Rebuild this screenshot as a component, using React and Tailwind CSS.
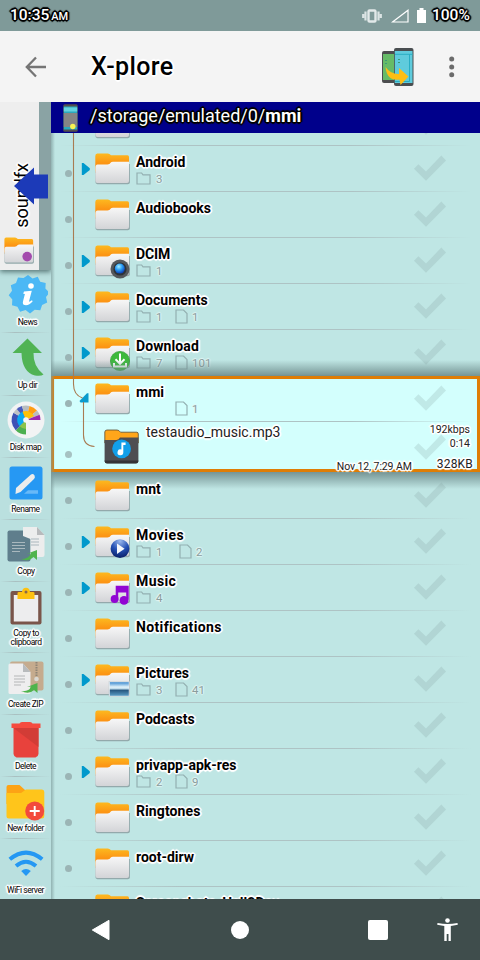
import React from 'react';

const HALO =
  '[text-shadow:1px_0_0_#fff,-1px_0_0_#fff,0_1px_0_#fff,0_-1px_0_#fff,1px_1px_0_#fff,-1px_-1px_0_#fff,1px_-1px_0_#fff,-1px_1px_0_#fff,2px_0_1px_#fff,-2px_0_1px_#fff,0_2px_1px_#fff,0_-2px_1px_#fff]';
const DARK_HALO =
  '[text-shadow:1px_0_0_#000,-1px_0_0_#000,0_1px_0_#000,0_-1px_0_#000,1px_1px_0_#000,-1px_-1px_0_#000,1px_-1px_0_#000,-1px_1px_0_#000,2px_0_1px_#000,-2px_0_1px_#000,0_2px_1px_#000,0_-2px_1px_#000]';
const SOFT_HALO =
  '[text-shadow:1px_0_1px_#e4f6f5,-1px_0_1px_#e4f6f5,0_1px_1px_#e4f6f5,0_-1px_1px_#e4f6f5]';

function Defs() {
  return (
    <svg width="0" height="0" className="absolute">
      <defs>
        <linearGradient id="tab" x1="0" y1="0" x2="0" y2="1">
          <stop offset="0" stopColor="#fdb91f" />
          <stop offset="0.5" stopColor="#fc9414" />
        </linearGradient>
        <linearGradient id="front" x1="0" y1="0" x2="0" y2="1">
          <stop offset="0" stopColor="#f7f7f7" />
          <stop offset="1" stopColor="#d3d4d7" />
        </linearGradient>
        <radialGradient id="lens" cx="0.4" cy="0.3" r="0.7">
          <stop offset="0" stopColor="#a4efff" />
          <stop offset="0.5" stopColor="#2a9cf4" />
          <stop offset="1" stopColor="#0c3fb4" />
        </radialGradient>
        <radialGradient id="play" cx="0.5" cy="0.1" r="0.95">
          <stop offset="0" stopColor="#9bb8ec" />
          <stop offset="0.5" stopColor="#2450b4" />
          <stop offset="1" stopColor="#06185e" />
        </radialGradient>
        <linearGradient id="scene" x1="0" y1="0" x2="0" y2="1">
          <stop offset="0" stopColor="#3d8bd0" />
          <stop offset="0.36" stopColor="#e4f4fb" />
          <stop offset="0.5" stopColor="#b4d4e6" />
          <stop offset="0.58" stopColor="#26557e" />
          <stop offset="1" stopColor="#5a9cc4" />
        </linearGradient>
      </defs>
    </svg>
  );
}

function Badge({ kind }) {
  if (kind === 'camera')
    return (
      <g>
        <circle cx="25" cy="24" r="9.5" fill="#55585c" />
        <circle cx="25" cy="24" r="6.6" fill="#2e3338" />
        <circle cx="24.8" cy="23.6" r="5" fill="url(#lens)" />
      </g>
    );
  if (kind === 'download')
    return (
      <g>
        <circle cx="25" cy="24" r="9.6" fill="#3eb93c" stroke="#329c35" strokeWidth="0.7" />
        <path d="M25 16.500v10M20.500 22.300l4.500 4.500 4.500-4.500M19 26v3.500h12v-3.500" fill="none" stroke="#fff" strokeWidth="2" />
      </g>
    );
  if (kind === 'movie')
    return (
      <g>
        <circle cx="25" cy="22.700" r="9.400" fill="url(#play)" />
        <path d="M22 17.500v10.600l7.600-5.300z" fill="#f5f7fb" />
      </g>
    );
  if (kind === 'music')
    return (
      <g fill="#9106d3">
        <path d="M20.700 13.700h13v14h-2.500v-7.300h-8v7.500h-2.500z" />
        <circle cx="19.600" cy="27" r="3.900" />
        <circle cx="29" cy="28.400" r="4.400" />
      </g>
    );
  if (kind === 'photo')
    return (
      <g>
        <rect x="14" y="17.500" width="20.500" height="15" fill="#f2f4f6" stroke="#bfc9cd" strokeWidth="0.5" />
        <rect x="14.800" y="18.200" width="19" height="13.600" fill="url(#scene)" />
      </g>
    );
  if (kind === 'purple') return <circle cx="27" cy="23" r="5.600" fill="#a34bad" />;
  return null;
}

function Folder({ badge, className = 'w-[36px] h-[34px]' }) {
  return (
    <svg viewBox="0 0 36 34" className={`block shrink-0 overflow-visible ${className}`}>
      <path d="M0.300 3Q0.300 0.500 2.300 0.500H12.800Q14.500 0.500 16 2.300H32.500Q34 2.300 34 4.100V20H0.300z" fill="url(#tab)" />
      <path d="M0.400 18.500V29Q0.400 31 2.400 31.300H32.800Q34.900 31 34.900 29.200V11H33.500L0.400 18z" fill="#93a9ab" />
      <path d="M0.400 15Q0.400 11.500 2.500 11.500H12.500Q14.800 11.400 15.600 9.800Q16.200 8.700 18 8.700H34V28Q34 30 32 30H2.500Q0.400 30 0.400 28z" fill="url(#front)" />
      <Badge kind={badge} />
    </svg>
  );
}

function AudioFolder() {
  return (
    <svg viewBox="0 0 35 36" className="block h-[36px] w-[35px] shrink-0">
      <path d="M0.800 3Q1 1 3 1H13Q15 1 16.500 3.200H33Q34.300 3.400 34.300 5V14H0.800z" fill="#ffa61a" stroke="#5b4b31" strokeWidth="0.8" />
      <path d="M0.600 11H12.500Q15 10.800 16 8.400H34.400V31.500Q34.400 34.300 32 34.300H3Q0.600 34.300 0.600 32z" fill="#4e4e52" />
      <path d="M0.600 31.500H34.400Q34.400 34.500 32 34.600H3Q0.600 34.500 0.600 31.500z" fill="#343436" />
      <circle cx="17.600" cy="19.800" r="9.400" fill="#129fe9" />
      <path d="M17.400 13.500h4.200v2.600h-2.300v7.200a2.900 2.900 0 1 1-1.900-2.700z" fill="#fff" />
    </svg>
  );
}

function Check({ className = '' }) {
  return (
    <svg viewBox="0 0 34 28" className={`block h-[28px] w-[34px] shrink-0 ${className}`}>
      <path d="M1 13.700L5.400 9.200L13 16.600L28.300 0.600L33 5.500L13 25.800z" fill="#7e9a9a" fillOpacity="0.22" />
    </svg>
  );
}

function Separator() {
  return <div className="h-px w-full bg-linear-to-r from-transparent via-[#a9bfc0] via-30% to-transparent" />;
}

function RowSeparator() {
  return <div className="h-px w-full bg-[linear-gradient(to_right,transparent_2%,#aec3c4_30%,#aec3c4_70%,transparent_98%)]" />;
}

function Counts({ folders, files, gap }) {
  return (
    <div className={`flex h-[16px] items-center pt-px text-[11.5px] leading-[16px] text-[#8a9d9d] ${SOFT_HALO}`}>
      <div className={`flex items-center ${gap || 'w-[38px]'}`}>
        {folders && (
          <>
            <svg viewBox="0 0 15 13" className="mr-[5px] block h-[13px] w-[15px]">
              <path d="M1 1H5.600L7 2.800H14V12H1z" fill="none" stroke="#93b0b1" strokeWidth="1.200" />
            </svg>
            <span>{folders}</span>
          </>
        )}
      </div>
      {files && (
        <>
          <svg viewBox="0 0 13 15" className="ml-px mr-[4px] block h-[15px] w-[13px]">
            <path d="M1 1H8.500L12 4.500V14H1z" fill="none" stroke="#93b0b1" strokeWidth="1.200" />
          </svg>
          <span>{files}</span>
        </>
      )}
    </div>
  );
}

function Row({ name, arrow, open, badge, folders, files, gap, tracking = '' }) {
  return (
    <div className="flex h-[46px] w-full shrink-0 flex-col">
      <div className="flex h-[45px] items-start">
        <div className="ml-[14px] mt-[24px] h-[7px] w-[7px] shrink-0 rounded-full bg-[#9bb5b5]" />
        <div className="ml-[9px] mt-[16px] h-[14px] w-[14px] shrink-0">
          {arrow && (
            <svg viewBox="0 0 14 14" className="block h-[14px] w-[14px]">
              <path d="M0.800 1H2.500L8.800 6.200V8L2.500 13H0.800z" fill="#0099cc" />
            </svg>
          )}
          {open && (
            <svg viewBox="0 0 14 14" className="block h-[14px] w-[14px] overflow-visible">
              <path d="M-1.500 9L6 1.200H7.500V10.500H-0.500z" fill="#0a9bcd" />
            </svg>
          )}
        </div>
        <Folder badge={badge} className="mt-[7px] h-[34px] w-[36px]" />
        <div className="ml-[5px] mt-[8px] flex grow flex-col">
          <div className={`h-[16px] whitespace-nowrap text-[14px] font-bold leading-[16px] text-black ${tracking} ${HALO}`}>{name}</div>
          {(folders || files) && <Counts folders={folders} files={files} gap={gap} />}
        </div>
        <Check className="mr-[33px] mt-[9px]" />
      </div>
      <RowSeparator />
    </div>
  );
}

function FileRow() {
  return (
    <div className="flex h-[51px] w-full shrink-0 items-start">
      <div className="ml-[14px] mt-[29px] h-[7px] w-[7px] shrink-0 rounded-full bg-[#a6c2c2]" />
      <div className="ml-[32px] mt-[7px]">
        <AudioFolder />
      </div>
      <div className={`ml-[7px] mt-[1px] whitespace-nowrap text-[14px] leading-[18px] text-[#222] ${HALO}`}>testaudio_music.mp3</div>
      <div className="relative ml-auto h-[51px] w-[150px]">
        <div className="absolute left-[83px] top-[12px]">
          <Check />
        </div>
        <div className={`relative flex h-full flex-col items-end pr-[10px] pt-[1px] text-[10.5px] leading-[14px] text-[#222] ${HALO}`}>
          <span>192kbps</span>
          <span>0:14</span>
          <div className="flex items-end gap-[25px] pt-[6px]">
            <span className="-mb-[2px] whitespace-nowrap tracking-[-0.1px]">Nov 12, 7:29 AM</span>
            <span className="-mr-[3px] text-[12px] leading-[15px] tracking-[0.2px]">328KB</span>
          </div>
        </div>
      </div>
    </div>
  );
}

const icons = {
  news: (
    <svg viewBox="0 0 40 40" className="block h-[40px] w-[40px]">
      <path d="M20 1l4.500 3.500 5.300-1.800 2.400 5.100 5.500 1.200-.3 5.600 4 4-3.400 4.400 1.200 5.500-5.100 2.400-1.800 5.300-5.600-.4L22 39.500l-4.400-3.400-5.500 1.600-2.700-5-5.400-1.500.3-5.600-3.600-4.300 3.300-4.500-1.200-5.500 5.200-2.400 2-5.300 5.500.5z" fill="#4bb8f5" />
      <circle cx="23" cy="12" r="2.800" fill="#fff" />
      <path d="M16 17.600l7.800-.8-2.700 10.200q-.2 1.600 2.800-.8l.8 1q-4 4.800-8 3.900-2.600-.8-1.600-4.200l1.800-6.800-1.700-.4z" fill="#fff" />
    </svg>
  ),
  up: (
    <svg viewBox="0 0 34 40" className="block h-[40px] w-[34px]">
      <path d="M16.500 1.500L31 16H22.500Q22 29 32.500 37.500Q30 39.500 24 38.500Q11 35 10.500 16H1.500z" fill="#50b354" />
    </svg>
  ),
  disk: (
    <svg viewBox="0 0 38 38" className="block h-[38px] w-[38px]">
      <circle cx="19" cy="19" r="18.500" fill="#f2f3f4" />
      <path d="M19 19V33.500A14.500 14.500 0 0 1 8.700 29.200z" fill="#4caf50" />
      <path d="M19 19L8.700 29.200A14.500 14.500 0 0 1 6.500 11.700z" fill="#3f51b5" />
      <path d="M19 19L6.500 11.700A14.500 14.500 0 0 1 9.700 7.900z" fill="#bfc2c4" />
      <path d="M19 19L9.700 7.900A14.500 14.500 0 0 1 15 5z" fill="#4a5bbb" />
      <path d="M19 19L15 5A14.500 14.500 0 0 1 22.500 4.900z" fill="#b9bcbe" />
      <path d="M19 19L22.500 4.900A14.500 14.500 0 0 1 30 9.500z" fill="#ff9d12" />
      <path d="M19 19L30 9.500A14.500 14.500 0 0 1 32.600 13.800z" fill="#b9bcbe" />
      <path d="M19 19L32.600 13.800A14.500 14.500 0 0 1 33.500 19z" fill="#9c27b0" />
      <path d="M19 19L15.500 10.800A9 9 0 0 0 12.700 25.300z" fill="#0aa9f1" />
      <path d="M19 19L15.500 10.800A9 9 0 0 1 27 15z" fill="#ffc107" />
      <path d="M19 19V28A9 9 0 0 1 12.700 25.300z" fill="#8bc34a" />
      <circle cx="19" cy="19" r="2.800" fill="#f7f7f7" />
    </svg>
  ),
  rename: (
    <svg viewBox="0 0 34 34" className="block h-[34px] w-[34px]">
      <rect x="0.500" y="0.500" width="33" height="33" rx="2.500" fill="#2698f3" />
      <path d="M7 22L22 8.500Q24 7.300 25.500 9.500Q26.500 11.500 25 13L11.500 26L6.500 28z" fill="#ececec" />
      <path d="M19 24.300H29V27.800H15z" fill="#68b9f8" />
    </svg>
  ),
  copy: (
    <svg viewBox="0 0 38 36" className="block h-[36px] w-[38px]">
      <rect x="0.500" y="4.500" width="23" height="31" rx="2" fill="#5f7e8c" />
      <path d="M16 1H30L37.500 9V29Q37.500 31 35.500 31H23.500V13L16 10z" fill="#eceded" />
      <path d="M30 1V9H37.500z" fill="#b7babc" />
      <path d="M5 16.500H18M5 19.500H18M5 22.500H18M5 25.500H13M24 13H32M24 16H32M24 19H32" stroke="#a9b8be" strokeWidth="1.200" />
      <path d="M14 33Q22 33 24 27L19.500 28L30 24V34L26.500 31Q22 36 14 33z" fill="#4fb44c" />
    </svg>
  ),
  clipboard: (
    <svg viewBox="0 0 32 38" className="block h-[38px] w-[32px]">
      <rect x="0.500" y="4" width="31" height="33.500" rx="2" fill="#7a554a" />
      <rect x="3.800" y="8" width="24.400" height="26.500" fill="#ededee" />
      <path d="M7.500 6Q7.500 5 9 5H12Q12.500 0.800 16 0.800T20 5H23Q24.500 5 24.500 6V12H7.500z" fill="#fdc111" />
      <circle cx="16" cy="5" r="1.500" fill="#8a684b" />
    </svg>
  ),
  zip: (
    <svg viewBox="0 0 36 34" className="block h-[34px] w-[36px]">
      <rect x="2" y="0.500" width="33.500" height="29" rx="2" fill="#c5ab8e" />
      <path d="M28.500 1V18" stroke="#8f8576" strokeWidth="2" strokeDasharray="1.500 1" />
      <circle cx="28.500" cy="18" r="2.300" fill="#dad8d2" />
      <path d="M0.500 4Q0.500 2.500 2 2.500H15L22.500 11V31.500Q22.500 33 21 33H2Q0.500 33 0.500 31.500z" fill="#eeeeef" />
      <path d="M15 2.500V11H22.500z" fill="#b8bbbd" />
      <path d="M6 15H17M6 18H17M6 21H17M6 24H13" stroke="#b3b6b8" strokeWidth="1.200" />
      <path d="M13 30Q21 31 23 25.500L19 26L29.500 22V32L26 29Q21 34 13 30z" fill="#4fb44c" />
    </svg>
  ),
  del: (
    <svg viewBox="0 0 30 37" className="block h-[37px] w-[30px]">
      <path d="M2.500 6H27.500V33Q27 36 24.500 36.500H5.500Q3 36 2.500 33z" fill="#e8423c" />
      <path d="M2.500 7H27.500V26z" fill="#d23c36" />
      <path d="M0.500 2.500H8.500Q9 1 11 1H19Q21 1 21.500 2.500H29.500V7H0.500z" fill="#f54b3f" />
    </svg>
  ),
  folder: (
    <svg viewBox="0 0 39 37" className="block h-[37px] w-[39px]">
      <path d="M0.500 3Q0.500 1 2.500 1H13.500L19 6H30V20H0.500z" fill="#fda315" />
      <path d="M0.500 9H15L20 5.500H36Q38.300 5.500 38.300 8V32Q38.300 34.500 36 34.500H3Q0.500 34.500 0.500 32z" fill="#ffc51b" />
      <circle cx="28.700" cy="27" r="9.500" fill="#f34a3c" />
      <path d="M28.700 22V32M23.700 27H33.700" stroke="#fff" strokeWidth="1.900" />
    </svg>
  ),
  wifi: (
    <svg viewBox="0 0 36 27" className="block h-[27px] w-[36px]">
      <path d="M1.800 9.300Q18 -4.100 34.200 9.300M8 16Q18 7.500 28 16" fill="none" stroke="#2598f3" strokeWidth="4" />
      <path d="M13.200 21Q18 17 22.800 21L18 26z" fill="#2598f3" />
    </svg>
  ),
};

const tools = [
  ['news', 'News', 'h-[63px] pt-[4px]', 'pl-[4px]'],
  ['up', 'Up dir', 'h-[63px] pt-[4px]', 'pl-[4px]'],
  ['disk', 'Disk map', 'h-[62px] pt-[5px]', ''],
  ['rename', 'Rename', 'h-[62px] pt-[8px]', ''],
  ['copy', 'Copy', 'h-[62px] pt-[6px]', 'pl-px'],
  ['clipboard', 'Copy to\nclipboard', 'h-[71px] pt-[5px]', 'pl-px'],
  ['zip', 'Create ZIP', 'h-[62px] pt-[8px]', ''],
  ['del', 'Delete', 'h-[62px] pt-[6px]', ''],
  ['folder', 'New folder', 'h-[62px] pt-[7px]', ''],
  ['wifi', 'WiFi server', 'h-[60px] pt-[11px]', ''],
];

function Tool({ tool, last }) {
  const [icon, label, box, shift] = tool;
  return (
    <div className={`flex w-full shrink-0 flex-col items-center ${box}`}>
      <div className={shift}>{icons[icon]}</div>
      <div className={`mt-auto whitespace-pre text-center text-[8.5px] leading-[9px] tracking-[-0.45px] text-black ${shift} ${last ? 'mb-[4px]' : 'mb-[5px]'} ${HALO}`}>
        {label}
      </div>
      {!last && <Separator />}
    </div>
  );
}

const before = [
  { name: 'Android', arrow: true, folders: '3' },
  { name: 'Audiobooks' },
  { name: 'DCIM', arrow: true, folders: '1', badge: 'camera', tracking: 'tracking-[-0.1px]' },
  { name: 'Documents', arrow: true, folders: '1', files: '1' },
  { name: 'Download', arrow: true, folders: '7', files: '101', badge: 'download', tracking: 'tracking-[0.1px]' },
];
const after = [
  { name: 'mnt' },
  { name: 'Movies', arrow: true, folders: '1', files: '2', badge: 'movie', gap: 'w-[42px]', tracking: 'tracking-[0.4px]' },
  { name: 'Music', arrow: true, folders: '4', badge: 'music', tracking: 'tracking-[0.4px]' },
  { name: 'Notifications', tracking: 'tracking-[0.36px]' },
  { name: 'Pictures', arrow: true, folders: '3', files: '41', badge: 'photo', tracking: 'tracking-[0.1px]' },
  { name: 'Podcasts' },
  { name: 'privapp-apk-res', arrow: true, folders: '2', files: '9' },
  { name: 'Ringtones', tracking: 'tracking-[0.1px]' },
  { name: 'root-dirw' },
  { name: 'Screenshots_Hall2Day', tracking: 'tracking-[0.1px]' },
];

function StatusBar() {
  return (
    <div className="flex h-[31px] shrink-0 items-center bg-[#7f9a99] px-[10px] text-white">
      <div className={`flex items-baseline font-medium ${DARK_HALO}`}>
        <span className="text-[15.5px]">10:35</span>
        <span className="ml-[2px] text-[11px]">AM</span>
      </div>
      <svg viewBox="0 0 20 14" className="ml-auto block h-[14px] w-[20px]">
        <rect x="6.500" y="1.500" width="7" height="11" rx="1" fill="none" stroke="#e2e9e9" strokeWidth="2.400" />
        <path d="M3.500 2.500V11.500M16.500 2.500V11.500M1.200 5V9M18.800 5V9" stroke="#dbe4e4" strokeWidth="2.200" />
      </svg>
      <svg viewBox="0 0 18 14" className="ml-[9px] block h-[14px] w-[18px]">
        <path d="M1.500 13L17 1.300V13z" fill="none" stroke="#fff" strokeWidth="1.200" />
      </svg>
      <svg viewBox="0 0 9 15" className="ml-[8px] block h-[15px] w-[9px]">
        <path d="M0 2H2.500V0H6.500V2H9V15H0z" fill="#fff" />
      </svg>
      <span className={`ml-[6px] w-[38px] whitespace-nowrap text-[15.5px] font-medium ${DARK_HALO}`}>100%</span>
    </div>
  );
}

function AppBar() {
  return (
    <div className="flex h-[71px] shrink-0 items-center bg-[#f4f4f4]">
      <svg viewBox="0 0 22 22" className="ml-[25px] block h-[22px] w-[22px]">
        <path d="M21 11H2M11 1.500L1.800 11L11 20.500" fill="none" stroke="#757575" strokeWidth="2.300" />
      </svg>
      <h1 className={`ml-[44px] text-[25px] font-medium leading-[30px] tracking-[0.4px] text-black ${HALO}`}>X-plore</h1>
      <svg viewBox="0 0 34 40" className="ml-auto block h-[40px] w-[34px]">
        <rect x="1" y="4" width="19" height="32" rx="2" fill="#4c4d4f" />
        <rect x="2" y="7" width="17" height="26" fill="#66bb67" />
        <rect x="13" y="1" width="19.500" height="38" rx="2" fill="#4a4e51" />
        <rect x="13.800" y="4" width="17.700" height="32" fill="#5fcbdc" />
        <path d="M14 7.300H31.500M28.500 7.300V34.500H14" stroke="#28adc4" strokeWidth="1" fill="none" />
        <path d="M4 13.500h2M4 16.500h2M17 12.500h2M17 15.500h2" stroke="#3c9c77" strokeWidth="1" />
        <path d="M4.500 20Q10 27.500 18 27V21L27.500 29.500L19.500 38L18.500 32.500Q6 34.500 4.500 20z" fill="#fdbe14" />
      </svg>
      <svg viewBox="0 0 6 22" className="ml-[34px] mr-[25px] block h-[22px] w-[6px] fill-[#6b6b6b]">
        <circle cx="2.700" cy="3" r="2.500" />
        <circle cx="2.700" cy="11" r="2.500" />
        <circle cx="2.700" cy="18.700" r="2.500" />
      </svg>
    </div>
  );
}

function SidePane() {
  return (
    <div className="flex w-[51px] shrink-0 flex-col overflow-hidden bg-[#bae0df]">
      <div className="relative z-10 flex h-[168px] shrink-0 bg-[#8aa3a4] shadow-[0_2px_5px_#587777]">
        <div className="flex w-[39px] flex-col items-center justify-end bg-[#eeeeee]">
          <span className={`ml-[5px] rotate-180 text-[18px] leading-[22px] text-black [writing-mode:vertical-rl] ${HALO}`}>soundfx</span>
          <Folder badge="purple" className="mb-[4px] mt-[9px] h-[29px] w-[31px]" />
        </div>
        <svg viewBox="0 0 34 38" className="absolute left-[14px] top-[65px] block h-[38px] w-[34px]">
          <path d="M0 19L20 0.500V7.500H34V31.500H20V37.500z" fill="#1c3ab8" />
        </svg>
      </div>
      {tools.map((tool, i) => (
        <Tool key={tool[0]} tool={tool} last={i === tools.length - 1} />
      ))}
    </div>
  );
}

function FilePane() {
  return (
    <div className="flex min-w-0 grow flex-col overflow-hidden bg-[#bfe6e4]">
      <div className="flex h-[31px] shrink-0 items-center bg-[#00008b]">
        <svg viewBox="0 0 15 28" className="ml-[12px] block h-[28px] w-[15px]">
          <rect x="0.300" y="0.300" width="14.400" height="27.400" rx="1.500" fill="#53504d" />
          <rect x="0.800" y="2.500" width="13.400" height="23" fill="#2aa8bd" />
          <rect x="0.800" y="3.500" width="13.400" height="4" fill="#65d1df" />
          <rect x="0.800" y="9" width="13.400" height="14" fill="#858585" />
          <circle cx="9.800" cy="22.500" r="2.700" fill="#f8f452" />
        </svg>
        <div className={`-mt-[3px] ml-[12px] whitespace-nowrap text-[18px] leading-[24px] text-white ${DARK_HALO}`}>
          /storage/emulated/0/<b>mmi</b>
        </div>
      </div>
      <div className="relative flex grow flex-col overflow-hidden">
        <div className="flex h-[13px] shrink-0 flex-col justify-end overflow-hidden">
          <Row name="" />
        </div>
        {before.map((r) => (
          <Row key={r.name} {...r} />
        ))}
        <div className="relative h-[97px] shrink-0">
          <div className="absolute inset-x-0 -top-[16px] h-[16px] bg-linear-to-b from-transparent to-[#6d8b8b]/90" />
          <div className="absolute inset-x-0 bottom-px top-0 border-[3px] border-[#df7d05] bg-[#d3fffd]" />
          <div className="relative z-10">
            <Row name="mmi" open files="1" />
            <FileRow />
          </div>
        </div>
        <div className="relative h-0">
          <div className="absolute inset-x-0 -top-px h-[17px] bg-linear-to-b from-[#6d8b8b]/90 to-transparent" />
        </div>
        {after.map((r) => (
          <div key={r.name} className="relative shrink-0">
            <Row {...r} />
          </div>
        ))}
        <svg viewBox="0 0 60 340" className="pointer-events-none absolute left-0 top-0 z-20 block h-[340px] w-[60px]">
          <path d="M22.500 0V251Q22.500 262 31.500 265M32.500 269V302Q32.500 313 43.500 313.500" fill="none" stroke="#a87b52" strokeWidth="1.100" />
        </svg>
        <div className="pointer-events-none absolute inset-y-0 left-0 w-[4px] bg-linear-to-r from-[#7d9c9c]/70 to-transparent" />
      </div>
    </div>
  );
}

function NavBar() {
  return (
    <div className="flex h-[61px] shrink-0 items-center bg-[#3f4d4c] text-white">
      <svg viewBox="0 0 20 22" className="ml-[91px] block h-[22px] w-[20px]">
        <path d="M1.300 11L18 1.300V20.700z" fill="#fff" stroke="#fff" strokeLinejoin="round" />
      </svg>
      <div className="ml-[120px] h-[18px] w-[18px] rounded-full bg-white" />
      <div className="ml-[119px] h-[20px] w-[20px] rounded-[2px] bg-white" />
      <svg viewBox="0 0 20 23" className="ml-[49px] block h-[23px] w-[21px] fill-white">
        <circle cx="10" cy="2.500" r="2.300" />
        <path d="M0 5Q10 7 20 5L20.300 6.800L13.300 8V23H11V16H9.200V23H6.800V8L-0.300 6.800z" />
      </svg>
    </div>
  );
}

export default function App() {
  return (
    <div className="flex h-[960px] w-[480px] flex-col overflow-hidden font-[Roboto,sans-serif]">
      <Defs />
      <StatusBar />
      <AppBar />
      <div className="flex h-[797px] shrink-0">
        <SidePane />
        <FilePane />
      </div>
      <NavBar />
    </div>
  );
}
